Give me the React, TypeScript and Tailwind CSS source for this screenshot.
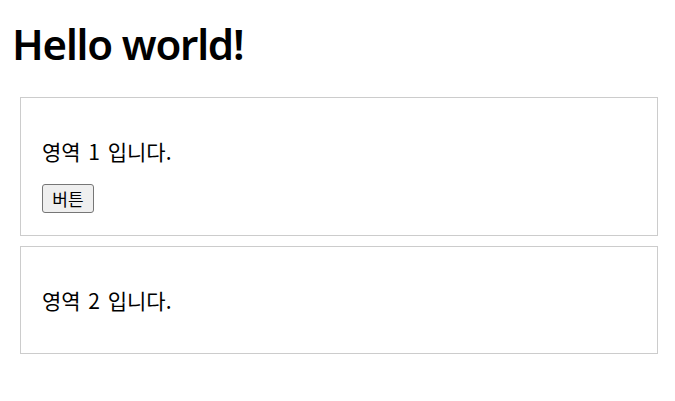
export default function App() {
  return (
    <div
      className="min-h-[401px] bg-white pt-[20px] text-black"
      style={{ fontFamily: '"Noto Sans CJK KR", "Noto Sans", sans-serif' }}
    >
      <h1
        className="ml-[12px] h-[48px] text-[42px] font-semibold leading-[48px] tracking-[-1.2px]"
        style={{ fontFamily: '"Noto Sans", "Noto Sans CJK KR", sans-serif' }}
      >
        Hello world!
      </h1>

      <div className="mt-[29px] ml-[20px] h-[139px] w-[638px] border border-[#cccccc] pt-[41px] pl-[21px]">
        <p className="text-[21px] leading-[24px] [word-spacing:3px]">영역 1 입니다.</p>
        <button className="mt-[21px] flex h-[29px] w-[52px] items-center justify-center rounded-[3px] border border-[#767676] bg-[#efefef] text-[17px] leading-none">
          버튼
        </button>
      </div>

      <div className="mt-[10px] ml-[20px] h-[108px] w-[638px] border border-[#cccccc] pt-[41px] pl-[21px]">
        <p className="text-[21px] leading-[24px] [word-spacing:3px]">영역 2 입니다.</p>
      </div>
    </div>
  );
}
